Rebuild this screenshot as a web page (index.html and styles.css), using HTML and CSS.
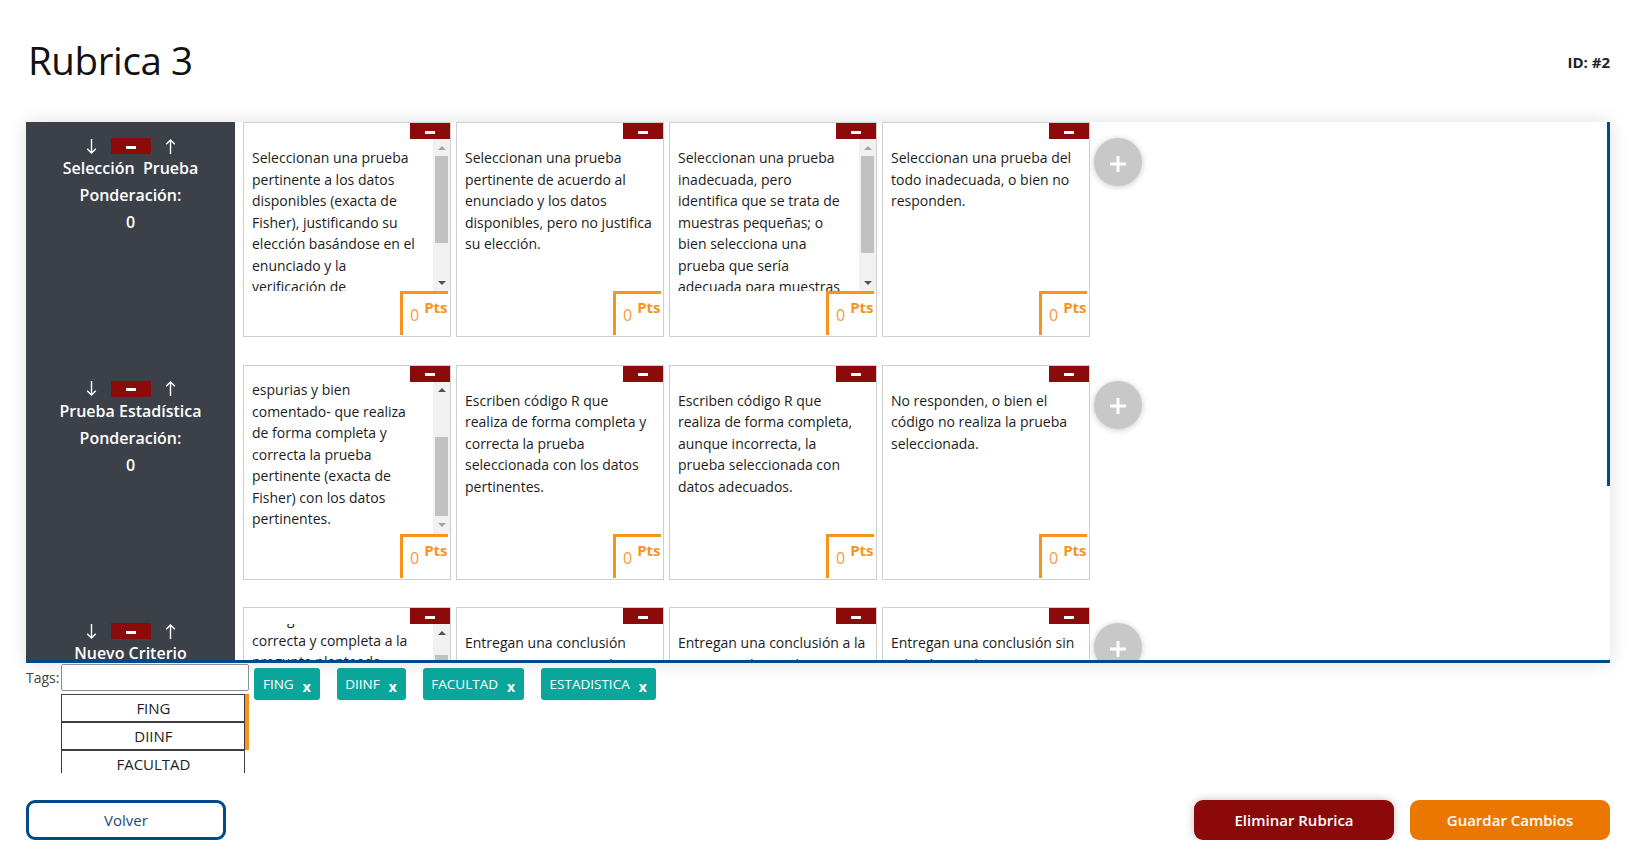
FILE: index.html
```html
<!DOCTYPE html>
<html lang="es">
<head>
<meta charset="utf-8">
<title>Rubrica 3</title>
<link rel="stylesheet" href="styles.css">
</head>
<body>
<div class="page">
  <header class="header">
    <h1 class="title">Rubrica 3</h1>
    <div class="rid">ID: #2</div>
  </header>

  <section class="board" data-sb>
    <div class="board-view sb-view">
      <div class="criteria">
        <!-- Row 1 -->
        <div class="crit">
          <div class="crit-side">
            <div class="crit-ctrl">
              <svg class="arrow" width="11" height="15" viewBox="0 0 11 15"><path d="M5.5 0V14M1.2 9.8L5.5 14L9.8 9.8" fill="none" stroke="#fff" stroke-width="1.4"/></svg>
              <button class="del"><span class="dash"></span></button>
              <svg class="arrow" width="11" height="15" viewBox="0 0 11 15"><path d="M5.5 15V1M1.2 5.2L5.5 1L9.8 5.2" fill="none" stroke="#fff" stroke-width="1.4"/></svg>
            </div>
            <div class="crit-name">Selección&nbsp; Prueba</div>
            <div class="crit-line">Ponderación:</div>
            <div class="crit-line">0</div>
          </div>
          <div class="cells">
            <div class="cell">
              <div class="cell-head"><button class="del"><span class="dash"></span></button></div>
              <div class="cell-body" data-sb>
                <div class="cell-text sb-view" data-scroll="0">Seleccionan una prueba pertinente a los datos disponibles (exacta de Fisher), justificando su elección basándose en el enunciado y la verificación de condiciones del problema.</div>
                <div class="vbar"><span class="vbar-btn up"></span><div class="sb-track"><span class="sb-thumb"></span></div><span class="vbar-btn down"></span></div>
              </div>
              <div class="cell-foot"><div class="pts"><span class="pts-val">0</span><span class="pts-lbl">Pts</span></div></div>
            </div>
            <div class="cell">
              <div class="cell-head"><button class="del"><span class="dash"></span></button></div>
              <div class="cell-body"><div class="cell-text">Seleccionan una prueba pertinente de acuerdo al enunciado y los datos disponibles, pero no justifica su elección.</div></div>
              <div class="cell-foot"><div class="pts"><span class="pts-val">0</span><span class="pts-lbl">Pts</span></div></div>
            </div>
            <div class="cell">
              <div class="cell-head"><button class="del"><span class="dash"></span></button></div>
              <div class="cell-body" data-sb>
                <div class="cell-text sb-view" data-scroll="0">Seleccionan una prueba inadecuada, pero identifica que se trata de muestras pequeñas; o bien selecciona una prueba que sería adecuada para muestras grandes.</div>
                <div class="vbar"><span class="vbar-btn up"></span><div class="sb-track"><span class="sb-thumb"></span></div><span class="vbar-btn down"></span></div>
              </div>
              <div class="cell-foot"><div class="pts"><span class="pts-val">0</span><span class="pts-lbl">Pts</span></div></div>
            </div>
            <div class="cell">
              <div class="cell-head"><button class="del"><span class="dash"></span></button></div>
              <div class="cell-body"><div class="cell-text">Seleccionan una prueba del todo inadecuada, o bien no responden.</div></div>
              <div class="cell-foot"><div class="pts"><span class="pts-val">0</span><span class="pts-lbl">Pts</span></div></div>
            </div>
            <button class="add"><svg width="16" height="16" viewBox="0 0 16 16"><path d="M8 0V16M0 8H16" stroke="#fff" stroke-width="3"/></svg></button>
          </div>
        </div>

        <!-- Row 2 -->
        <div class="crit">
          <div class="crit-side">
            <div class="crit-ctrl">
              <svg class="arrow" width="11" height="15" viewBox="0 0 11 15"><path d="M5.5 0V14M1.2 9.8L5.5 14L9.8 9.8" fill="none" stroke="#fff" stroke-width="1.4"/></svg>
              <button class="del"><span class="dash"></span></button>
              <svg class="arrow" width="11" height="15" viewBox="0 0 11 15"><path d="M5.5 15V1M1.2 5.2L5.5 1L9.8 5.2" fill="none" stroke="#fff" stroke-width="1.4"/></svg>
            </div>
            <div class="crit-name">Prueba Estadística</div>
            <div class="crit-line">Ponderación:</div>
            <div class="crit-line">0</div>
          </div>
          <div class="cells">
            <div class="cell">
              <div class="cell-head"><button class="del"><span class="dash"></span></button></div>
              <div class="cell-body" data-sb>
                <div class="cell-text sb-view" data-scroll="end">Escriben código R ordenado, estructurado, sin líneas de código espurias y bien comentado- que realiza de forma completa y correcta la prueba pertinente (exacta de Fisher) con los datos pertinentes.</div>
                <div class="vbar"><span class="vbar-btn up"></span><div class="sb-track"><span class="sb-thumb"></span></div><span class="vbar-btn down"></span></div>
              </div>
              <div class="cell-foot"><div class="pts"><span class="pts-val">0</span><span class="pts-lbl">Pts</span></div></div>
            </div>
            <div class="cell">
              <div class="cell-head"><button class="del"><span class="dash"></span></button></div>
              <div class="cell-body"><div class="cell-text">Escriben código R que realiza de forma completa y correcta la prueba seleccionada con los datos pertinentes.</div></div>
              <div class="cell-foot"><div class="pts"><span class="pts-val">0</span><span class="pts-lbl">Pts</span></div></div>
            </div>
            <div class="cell">
              <div class="cell-head"><button class="del"><span class="dash"></span></button></div>
              <div class="cell-body"><div class="cell-text">Escriben código R que realiza de forma completa, aunque incorrecta, la prueba seleccionada con datos adecuados.</div></div>
              <div class="cell-foot"><div class="pts"><span class="pts-val">0</span><span class="pts-lbl">Pts</span></div></div>
            </div>
            <div class="cell">
              <div class="cell-head"><button class="del"><span class="dash"></span></button></div>
              <div class="cell-body"><div class="cell-text">No responden, o bien el código no realiza la prueba seleccionada.</div></div>
              <div class="cell-foot"><div class="pts"><span class="pts-val">0</span><span class="pts-lbl">Pts</span></div></div>
            </div>
            <button class="add"><svg width="16" height="16" viewBox="0 0 16 16"><path d="M8 0V16M0 8H16" stroke="#fff" stroke-width="3"/></svg></button>
          </div>
        </div>

        <!-- Row 3 -->
        <div class="crit">
          <div class="crit-side">
            <div class="crit-ctrl">
              <svg class="arrow" width="11" height="15" viewBox="0 0 11 15"><path d="M5.5 0V14M1.2 9.8L5.5 14L9.8 9.8" fill="none" stroke="#fff" stroke-width="1.4"/></svg>
              <button class="del"><span class="dash"></span></button>
              <svg class="arrow" width="11" height="15" viewBox="0 0 11 15"><path d="M5.5 15V1M1.2 5.2L5.5 1L9.8 5.2" fill="none" stroke="#fff" stroke-width="1.4"/></svg>
            </div>
            <div class="crit-name">Nuevo Criterio</div>
            <div class="crit-line">Ponderación:</div>
            <div class="crit-line">0</div>
          </div>
          <div class="cells">
            <div class="cell">
              <div class="cell-head"><button class="del"><span class="dash"></span></button></div>
              <div class="cell-body" data-sb>
                <div class="cell-text sb-view" data-scroll="24">Entregan una conclusión correcta y completa a la pregunta planteada, interpretando adecuadamente los resultados obtenidos en el contexto del problema y respondiendo con claridad.</div>
                <div class="vbar"><span class="vbar-btn up"></span><div class="sb-track"><span class="sb-thumb"></span></div><span class="vbar-btn down"></span></div>
              </div>
              <div class="cell-foot"><div class="pts"><span class="pts-val">0</span><span class="pts-lbl">Pts</span></div></div>
            </div>
            <div class="cell">
              <div class="cell-head"><button class="del"><span class="dash"></span></button></div>
              <div class="cell-body"><div class="cell-text">Entregan una conclusión correcta, pero incompleta, a la pregunta planteada.</div></div>
              <div class="cell-foot"><div class="pts"><span class="pts-val">0</span><span class="pts-lbl">Pts</span></div></div>
            </div>
            <div class="cell">
              <div class="cell-head"><button class="del"><span class="dash"></span></button></div>
              <div class="cell-body"><div class="cell-text">Entregan una conclusión a la pregunta planteada, pero incorrecta.</div></div>
              <div class="cell-foot"><div class="pts"><span class="pts-val">0</span><span class="pts-lbl">Pts</span></div></div>
            </div>
            <div class="cell">
              <div class="cell-head"><button class="del"><span class="dash"></span></button></div>
              <div class="cell-body"><div class="cell-text">Entregan una conclusión sin relación con la pregunta planteada, o no responden.</div></div>
              <div class="cell-foot"><div class="pts"><span class="pts-val">0</span><span class="pts-lbl">Pts</span></div></div>
            </div>
            <button class="add"><svg width="16" height="16" viewBox="0 0 16 16"><path d="M8 0V16M0 8H16" stroke="#fff" stroke-width="3"/></svg></button>
          </div>
        </div>
      </div>
    </div>
    <div class="board-bar sb-track"><span class="sb-thumb"></span></div>
  </section>

  <div class="tags-row">
    <label class="tags-label">Tags:</label>
    <div class="tag-input-col">
      <input class="tag-input" type="text">
      <div class="tag-list" data-sb>
        <div class="tag-view sb-view">
          <div class="tag-opt">FING</div>
          <div class="tag-opt">DIINF</div>
          <div class="tag-opt">FACULTAD</div>
          <div class="tag-opt">ESTADISTICA</div>
        </div>
        <div class="tag-bar sb-track"><span class="sb-thumb"></span></div>
      </div>
    </div>
    <div class="chips">
      <span class="chip">FING<span class="chip-x">x</span></span>
      <span class="chip">DIINF<span class="chip-x">x</span></span>
      <span class="chip">FACULTAD<span class="chip-x">x</span></span>
      <span class="chip">ESTADISTICA<span class="chip-x">x</span></span>
    </div>
  </div>

  <div class="actions">
    <button class="btn btn-back">Volver</button>
    <div class="actions-right">
      <button class="btn btn-delete">Eliminar Rubrica</button>
      <button class="btn btn-save">Guardar Cambios</button>
    </div>
  </div>
</div>
<script src="app.js"></script>
</body>
</html>
```

FILE: app.js
```js
document.querySelectorAll('[data-sb]').forEach(function (box) {
  var view = box.querySelector(':scope > .sb-view');
  var track = box.querySelector(':scope > .sb-track, :scope > .vbar > .sb-track');
  if (!view || !track) return;
  var thumb = track.querySelector('.sb-thumb');
  var v = view.getAttribute('data-scroll');
  if (v) {
    view.scrollTop = v === 'end' ? view.scrollHeight : parseFloat(v);
  }
  var total = view.scrollHeight;
  var visible = view.clientHeight;
  var t = track.clientHeight;
  thumb.style.height = (t * visible / total) + 'px';
  thumb.style.marginTop = (t * view.scrollTop / total) + 'px';
  var up = box.querySelector('.vbar-btn.up');
  var down = box.querySelector('.vbar-btn.down');
  if (up && view.scrollTop <= 0) up.classList.add('off');
  if (down && view.scrollTop + visible >= total - 1) down.classList.add('off');
});
```

FILE: styles.css
```css
* { box-sizing: border-box; }

body {
  margin: 0;
  background: #fff;
  color: #222;
  font-family: "Open Sans", "Noto Sans", sans-serif;
}

button { font-family: inherit; }

.page {
  padding: 34px 28px 0 26px;
}

.header {
  display: flex;
  justify-content: space-between;
  align-items: center;
}

.title {
  margin: 0;
  padding-left: 2px;
  font-size: 38.5px;
  font-weight: 400;
  line-height: 52px;
  letter-spacing: -0.4px;
  color: #111;
}

.rid {
  font-size: 15px;
  font-weight: 700;
  color: #222;
  margin-top: 4px;
}

/* ---------- board ---------- */
.board {
  display: flex;
  margin-top: 36px;
  height: 541px;
  border-bottom: 3px solid #004a8c;
  background: #fff;
  box-shadow: 0 0 18px rgba(0, 0, 0, 0.13);
}

.board-view {
  flex: 1;
  min-width: 0;
  overflow: hidden;
}

.board-bar {
  flex: none;
  width: 3px;
}

.board-bar .sb-thumb {
  display: block;
  width: 3px;
  background: #004a8c;
}

.criteria {
  padding-bottom: 67px;
}

.crit {
  display: flex;
  height: 242.5px;
}

.crit-side {
  flex: none;
  width: 209px;
  background: #3b4049;
  color: #fff;
  text-align: center;
  padding-top: 16px;
}

.crit-ctrl {
  display: flex;
  justify-content: center;
  align-items: center;
  height: 16px;
  gap: 14px;
}

.arrow { display: block; }

.del {
  display: flex;
  align-items: center;
  justify-content: center;
  width: 40px;
  height: 16px;
  padding: 0;
  border: 0;
  background: #8b0a0a;
}

.dash {
  display: block;
  width: 10px;
  height: 3px;
  margin-top: 2px;
  background: #fff;
}

.crit-name {
  margin-top: 1px;
}

.crit-name,
.crit-line {
  font-size: 16px;
  font-weight: 600;
  line-height: 27px;
}

.cells {
  display: flex;
  align-items: flex-start;
  gap: 5px;
  margin-left: 8px;
}

.cell {
  display: flex;
  flex-direction: column;
  width: 208px;
  height: 215px;
  border: 1px solid #cfcfcf;
  background: #fff;
}

.cell-head {
  flex: none;
  display: flex;
  justify-content: flex-end;
  height: 16px;
}

.cell-body {
  flex: none;
  display: flex;
  height: 152px;
}

.cell-text {
  flex: 1;
  min-width: 0;
  overflow: hidden;
  padding: 8px 10px 4px 8px;
  font-size: 14px;
  line-height: 21.5px;
  color: #1c1c1c;
}

.vbar {
  flex: none;
  display: flex;
  flex-direction: column;
  width: 17px;
  background: #f1f1f1;
}

.vbar-btn {
  flex: none;
  display: flex;
  align-items: center;
  justify-content: center;
  height: 17px;
}

.vbar-btn::before {
  content: "";
  width: 0;
  height: 0;
  border-left: 4px solid transparent;
  border-right: 4px solid transparent;
}

.vbar-btn.up::before { border-bottom: 4px solid #505050; }
.vbar-btn.down::before { border-top: 4px solid #505050; }
.vbar-btn.up.off::before { border-bottom-color: #a3a3a3; }
.vbar-btn.down.off::before { border-top-color: #a3a3a3; }

.vbar .sb-track {
  flex: 1;
  padding: 0 2px;
}

.vbar .sb-thumb {
  display: block;
  background: #c1c1c1;
}

.cell-foot {
  flex: 1;
  display: flex;
  justify-content: flex-end;
  align-items: flex-start;
}

.pts {
  display: flex;
  align-items: flex-start;
  width: 48px;
  height: 44px;
  margin-right: 2px;
  padding: 3px 0 0 7px;
  border-left: 3px solid #f7941d;
  border-top: 3px solid #f7941d;
  line-height: 20px;
}

.pts-val {
  margin-top: 8px;
  font-size: 16px;
  color: #f59a3e;
}

.pts-lbl {
  margin-left: 5px;
  font-size: 15px;
  font-weight: 700;
  color: #f7931e;
}

.add {
  flex: none;
  display: flex;
  align-items: center;
  justify-content: center;
  width: 48px;
  height: 48px;
  margin: 16px 0 0 -1px;
  padding: 3px 0 0;
  border: 0;
  border-radius: 50%;
  background: #c8c8c8;
  box-shadow: 0 1px 6px rgba(0, 0, 0, 0.22);
}

/* ---------- tags ---------- */
.tags-row {
  display: flex;
  align-items: flex-start;
  margin-top: 1px;
}

.tags-label {
  margin-right: 2px;
  font-size: 14px;
  line-height: 27px;
  color: #444;
}

.tag-input-col {
  width: 188px;
}

.tag-input {
  display: block;
  width: 188px;
  height: 27px;
  margin: 0;
  border: 1px solid #8f8f8f;
  border-radius: 2px;
  background: #fff;
}

.tag-list {
  display: flex;
  height: 79px;
  margin-top: 3px;
}

.tag-view {
  flex: 1;
  min-width: 0;
  overflow: hidden;
}

.tag-bar {
  flex: none;
  width: 4px;
}

.tag-bar .sb-thumb {
  display: block;
  background: #f7941d;
}

.tag-opt {
  height: 28px;
  border: 1px solid #3d3d3d;
  font-size: 15px;
  line-height: 26px;
  text-align: center;
  color: #222;
  background: #fff;
}

.chips {
  display: flex;
  gap: 17px;
  margin: 4px 0 0 5px;
}

.chip {
  display: flex;
  align-items: center;
  height: 32px;
  padding: 0 9px 0 8.5px;
  border-radius: 3px;
  background: #0aa69b;
  color: #fff;
  font-size: 13.5px;
}

.chip-x {
  margin-left: 9px;
  margin-top: 4px;
  font-size: 14px;
  font-weight: 700;
}

/* ---------- actions ---------- */
.actions {
  display: flex;
  justify-content: space-between;
  margin-top: 27px;
}

.actions-right {
  display: flex;
  gap: 16px;
}

.btn {
  width: 200px;
  height: 40px;
  border-radius: 9px;
  font-size: 15px;
  cursor: pointer;
}

.btn-back {
  border: 3px solid #004a8c;
  background: #fff;
  color: #1b4a7e;
}

.btn-delete {
  border: 0;
  background: #8b0909;
  color: #fff;
  font-weight: 600;
  box-shadow: 0 0 8px rgba(0, 0, 0, 0.25);
}

.btn-save {
  border: 0;
  background: #ec7700;
  color: #fff;
  font-weight: 600;
}
```
